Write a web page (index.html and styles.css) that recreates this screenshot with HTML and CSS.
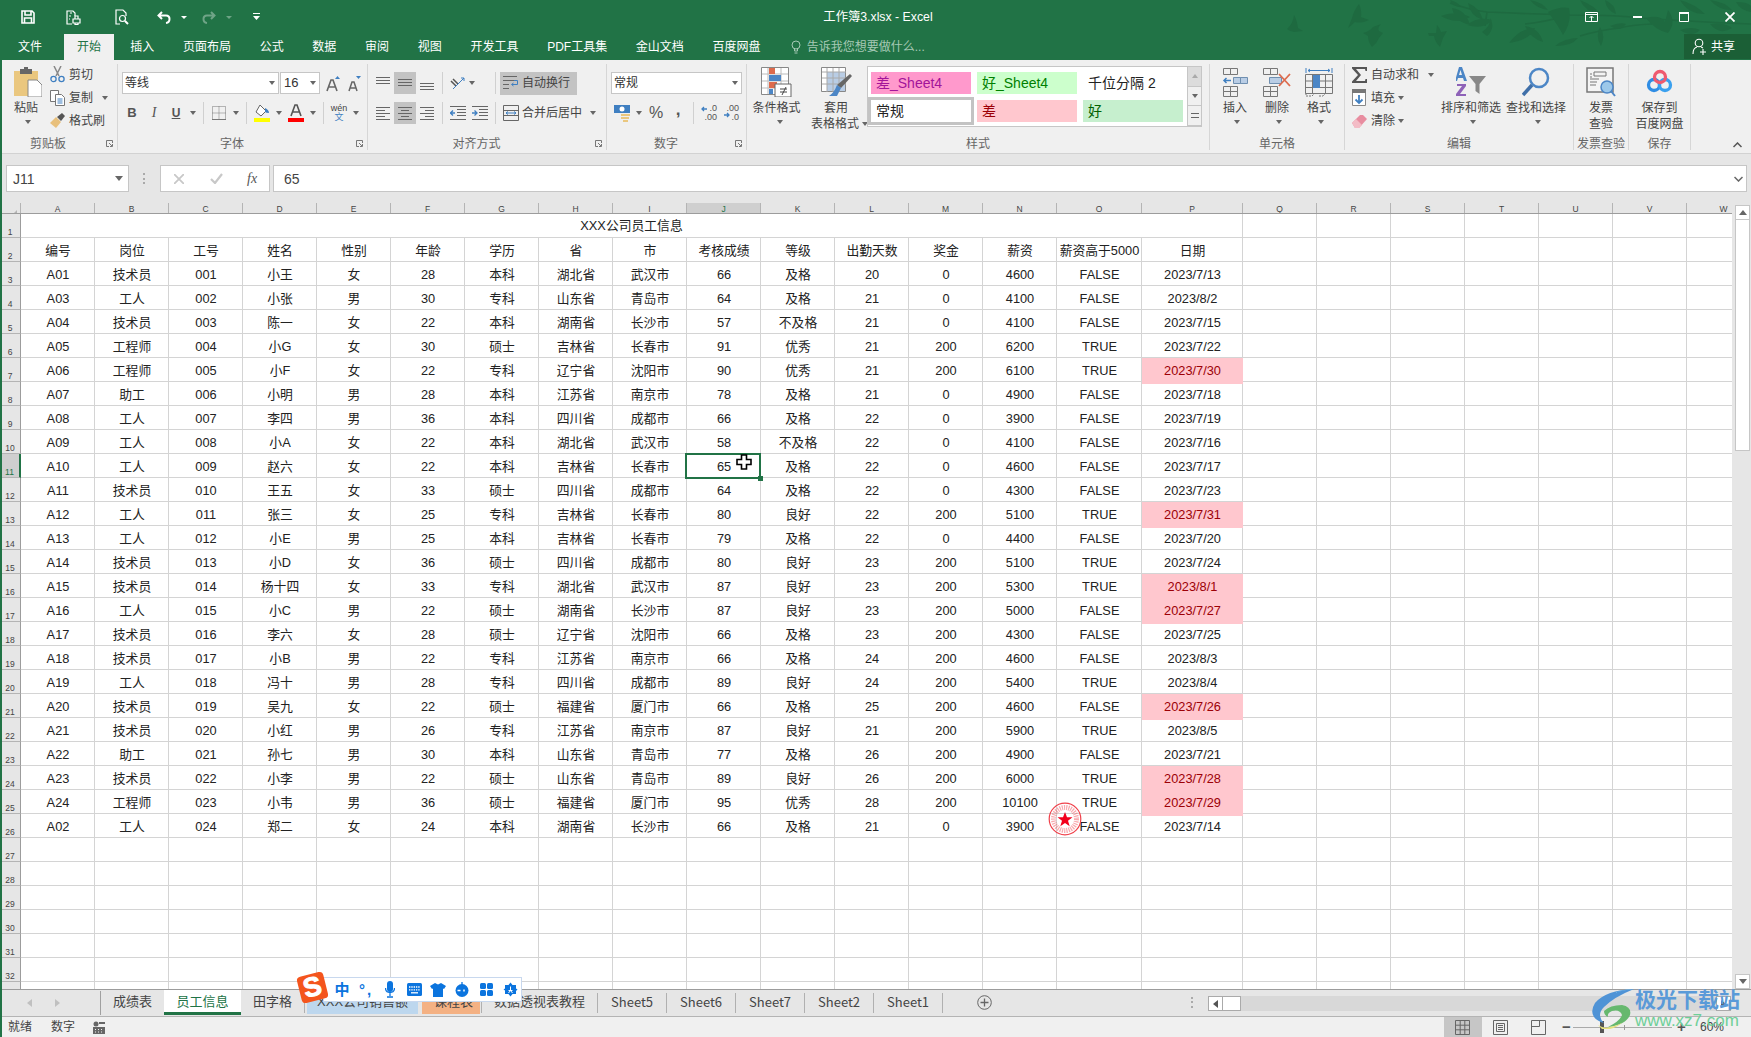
FILE: index.html
```html
<!DOCTYPE html>
<html lang="zh-CN">
<head>
<meta charset="utf-8">
<title>工作簿3.xlsx - Excel</title>
<link rel="stylesheet" href="styles.css">
</head>
<body>
<div class="app">
  <header class="title">
    <svg class="birds" width="471" height="47" viewBox="0 0 471 47" fill="#1e6a40">
      <path d="M7 29Q13 24 14 15Q17 20 18 28L23 31L14 32Q9 31 7 29z"/>
      <path d="M68 28L72 18Q74 10 79 4Q82 10 81 17L89 20L84 22Q78 23 75 22Q72 25 68 28z"/>
      <path d="M83 33Q90 31 93 27L101 24Q97 28 99 31L103 33L99 38Q97 43 92 47Q88 42 88 36z"/>
      <path d="M148 33L156 33L157 25Q160 28 161 32L167 31L163 38L160 47Q155 42 154 36L149 36z"/>
      <path d="M170 3Q190 10 207 12Q250 14 290 15Q340 15 360 18Q420 22 471 24M245 24Q265 22 285 16M300 36Q320 30 340 28Q350 25 372 24M207 12L205 26" fill="none" stroke="#1e6a40" stroke-width="1.600"/>
      <path d="M161 16Q175 10 190 17Q176 25 161 16zM172 8Q186 10 190 25Q175 22 172 8zM188 3Q200 8 203 20Q190 16 188 3zM170 0Q178 2 181 7Q172 7 170 0zM187 25Q198 16 212 20Q204 30 187 25zM202 32Q211 26 210 18Q216 28 207 36zM229 43Q240 28 255 28Q250 40 229 43zM245 26Q259 28 263 42Q250 38 245 26zM268 12Q280 6 289 8Q292 22 283 35Q278 25 268 12zM275 46Q285 38 298 38Q292 46 275 46zM320 27Q326 36 321 46Q315 36 320 27zM366 18Q380 14 385 22L388 10Q397 22 388 33Q375 30 366 18zM250 0Q262 2 268 10Q256 8 250 0zM300 0Q315 6 320 14Q305 12 300 0zM325 0Q335 4 336 14Q326 10 325 0zM330 26Q340 22 346 24Q340 32 330 26zM400 0Q415 4 425 14Q408 14 400 0zM430 0Q445 2 452 10Q438 10 430 0zM430 24Q445 22 452 28Q440 36 430 24zM456 2Q468 2 471 6L471 12Q460 10 456 2zM400 30Q412 26 420 30Q412 38 400 30z"/>
    </svg>
    <div class="qat">
      <svg width="14" height="14" viewBox="0 0 14 14" fill="none" stroke="#fff" stroke-width="1.6"><path d="M1 1h10l2 2v10H1zM4 1v4h6V1M3.500 13V8h7v5"/></svg>
      <svg class="m31" width="15" height="15" viewBox="0 0 15 15" fill="none" stroke="#fff" stroke-width="1.2"><path d="M6 14H1V1h6l2 2v3M4 3h2M3 6h2M3 9h1"/><path d="M7 9h7v4H7zM9 9V6h3v3M9 13v1.500h3V13"/></svg>
      <svg class="m34" width="14" height="16" viewBox="0 0 14 16" fill="none" stroke="#fff" stroke-width="1.2"><path d="M5 15H1V1h7l3 3v3"/><circle cx="7.500" cy="9.500" r="3"/><path d="M10 12l3 3" stroke-width="2"/></svg>
      <svg class="m28" width="14" height="13" viewBox="0 0 14 13" fill="none" stroke="#fff" stroke-width="2"><path d="M5 1L1.500 4.500 5 8M2 4.500h7q3.500 0 3.500 3.500T9 12"/></svg>
      <span class="qc m10"></span>
      <svg class="m15 dim" width="14" height="13" viewBox="0 0 14 13" fill="none" stroke="#fff" stroke-width="2"><path d="M9 1l3.500 3.500L9 8M12 4.500H5Q1.500 4.500 1.500 8T5 12"/></svg>
      <span class="qc m10 dim"></span>
      <svg class="m21" width="7" height="8" viewBox="0 0 7 8" fill="#fff"><path d="M0 0h7v1H0zM0 3h7L3.500 7z"/></svg>
    </div>
    <div class="doc-name">工作簿3.xlsx - Excel</div>
    <div class="win">
      <svg width="13" height="10" viewBox="0 0 13 10" fill="none" stroke="#fff"><path d="M.5.500h12v9H.5zM.5 2.500h12M6.500 9V4.500M4.500 6l2-2 2 2"/></svg>
      <svg class="m35" width="9" height="2" viewBox="0 0 9 2"><path d="M0 0h9v2H0z" fill="#fff"/></svg>
      <svg class="m37" width="10" height="10" viewBox="0 0 10 10" fill="none" stroke="#fff"><path d="M.5.500h9v9h-9z"/><path d="M0 1h10" stroke-width="2"/></svg>
      <svg class="m36" width="10" height="10" viewBox="0 0 10 10" stroke="#fff" stroke-width="1.8"><path d="M.5.500l9 9M9.500.500l-9 9"/></svg>
    </div>
  </header>

  <nav class="tabs">
    <a class="tab first">文件</a><a class="tab on">开始</a><a class="tab">插入</a><a class="tab">页面布局</a><a class="tab">公式</a><a class="tab">数据</a><a class="tab">审阅</a><a class="tab">视图</a><a class="tab">开发工具</a><a class="tab">PDF工具集</a><a class="tab">金山文档</a><a class="tab">百度网盘</a>
    <span class="tell">
      <svg width="10" height="15" viewBox="0 0 10 15" fill="none" stroke="#a6c9b5"><circle cx="5" cy="5" r="4"/><path d="M3.500 9v2h3V9M3.500 13h3"/></svg>
      告诉我您想要做什么...
    </span>
    <span class="share">
      <svg width="15" height="17" viewBox="0 0 15 17" fill="none" stroke="#fff" stroke-width="1.1"><circle cx="7" cy="5" r="3.800"/><path d="M1 16q0-6 4-7M9 9l2 1M8 14h6M11 11v6"/></svg>
      共享
    </span>
  </nav>

  <section class="ribbon">
    <div class="grp g-clip">
      <div class="body row-top">
        <div class="big paste">
          <svg class="pasteic" width="28" height="30" viewBox="0 0 28 30"><path d="M0 4h24v25H0z" fill="#eac77f" rx="2"/><path d="M6 2h4V0h4v2h4v5H6z" fill="#666"/><path d="M14 13h9l5 5v12H14z" fill="#fff" stroke="#888"/></svg>
          <span>粘贴</span>
          <span class="cr down"></span>
        </div>
        <div class="stack clipcol">
          <div class="sm"><svg width="15" height="17" viewBox="0 0 15 17" fill="none"><path d="M4 0l5 10M11 0L6 10" stroke="#888" stroke-width="1.500"/><circle cx="3.500" cy="13" r="2.600" stroke="#3f7fc1" stroke-width="1.300"/><circle cx="11.500" cy="13" r="2.600" stroke="#3f7fc1" stroke-width="1.300"/></svg><span>剪切</span></div>
          <div class="sm"><svg width="15" height="16" viewBox="0 0 15 16" fill="#fff" stroke="#777"><path d="M.5.500h8v11h-8z"/><path d="M5.500 4.500h6l3 3v8h-9z"/><path d="M7.500 9h5M7.500 11h5M7.500 13h5" stroke="#3f7fc1"/></svg><span>复制</span><span class="cr"></span></div>
          <div class="sm"><svg width="15" height="15" viewBox="0 0 15 15"><path d="M0 10l6-6 5 5-5 6z" fill="#e8c07c"/><path d="M7 4l5-4 3 3-4 5z" fill="#555"/></svg><span>格式刷</span></div>
        </div>
      </div>
      <div class="foot"><span class="lab">剪贴板</span><svg class="launch" width="7" height="7" viewBox="0 0 7 7" fill="none" stroke="#777"><path d="M6.500 3V.500H.500v6H3M3 3l3 3M6.500 4v2.500H4"/></svg></div>
    </div>

    <div class="grp g-font">
      <div class="body col-rows">
        <div class="line">
          <div class="combo fontname">等线<span class="cr end"></span></div>
          <div class="combo fontsize">16<span class="cr end"></span></div>
          <svg class="growA" width="14" height="17" viewBox="0 0 14 17"><path d="M1 16L5 5h2l4 11M3 12h6" fill="none" stroke="#666" stroke-width="1.600"/><path d="M9 4l2.500-3L14 4z" fill="#3f7fc1"/></svg>
          <svg class="shrinkA" width="13" height="17" viewBox="0 0 13 17"><path d="M1 16L4 7h2l3 9M2.500 13h5" fill="none" stroke="#666" stroke-width="1.500"/><path d="M8 1l2.500 3L13 1z" fill="#3f7fc1"/></svg>
        </div>
        <div class="line second">
          <span class="ic fb">B</span><span class="ic fi">I</span><span class="ic fu">U</span><span class="cr"></span><i class="sep"></i>
          <span class="ic"><svg width="14" height="14" viewBox="0 0 14 14" fill="none" stroke="#777" stroke-dasharray="1 1"><path d="M.5.500h13v13H.5zM7 .5v13M.5 7h13"/><path d="M0 13.500h14" stroke-dasharray="none"/></svg></span><span class="cr"></span><i class="sep"></i>
          <span class="ic"><svg width="16" height="18" viewBox="0 0 16 18"><path d="M6 1l-4 7 5 4 5-5z" fill="#fff" stroke="#666"/><path d="M11 4q4 2 4 5-3 0-4-1z" fill="#3f7fc1"/><path d="M0 14h16v4H0z" fill="#ff0"/></svg></span><span class="cr"></span>
          <span class="ic"><svg width="16" height="18" viewBox="0 0 16 18"><path d="M3 12L7 1h2l4 11M5 8h6" fill="none" stroke="#555" stroke-width="1.600"/><path d="M0 14h16v4H0z" fill="#f00"/></svg></span><span class="cr"></span><i class="sep"></i>
          <span class="ic wen"><small>wén</small><b>文</b></span><span class="cr"></span>
        </div>
      </div>
      <div class="foot"><span class="lab">字体</span><svg class="launch" width="7" height="7" viewBox="0 0 7 7" fill="none" stroke="#777"><path d="M6.500 3V.500H.500v6H3M3 3l3 3M6.500 4v2.500H4"/></svg></div>
    </div>

    <div class="grp g-align">
      <div class="body col-rows">
        <div class="line">
          <span class="ic"><svg width="14" height="14" viewBox="0 0 14 14" stroke="#666"><path d="M0 1.500h14M0 4.500h14M0 7.500h14"/></svg></span>
          <span class="ic act"><svg width="14" height="14" viewBox="0 0 14 14" stroke="#666"><path d="M0 3.500h14M0 6.500h14M0 9.500h14"/></svg></span>
          <span class="ic"><svg width="14" height="14" viewBox="0 0 14 14" stroke="#666"><path d="M0 7.500h14M0 10.500h14M0 13.500h14"/></svg></span>
          <i class="sep tall"></i>
          <span class="ic"><svg width="16" height="16" viewBox="0 0 16 16" fill="none" stroke="#555"><path d="M1 6l5 5M3 4l5 5" stroke-width="1.500"/><path d="M3 14L14 3M11 3h3v3" stroke="#3f7fc1"/></svg></span><span class="cr wide"></span>
          <i class="sep tall"></i>
          <div class="tool act"><svg width="16" height="16" viewBox="0 0 16 16" fill="none" stroke="#666"><path d="M0 1.500h14M0 5.500h11M0 9.500h6M0 13.500h6"/><path d="M11 5.500h3.500v4H9M10.500 8l-2 1.500 2 1.500" stroke="#3f7fc1"/></svg><span>自动换行</span></div>
        </div>
        <div class="line second">
          <span class="ic"><svg width="14" height="14" viewBox="0 0 14 14" stroke="#666"><path d="M0 1.500h14M0 4.500h9M0 7.500h14M0 10.500h9M0 13.500h14"/></svg></span>
          <span class="ic act"><svg width="14" height="14" viewBox="0 0 14 14" stroke="#666"><path d="M0 1.500h14M3 4.500h8M0 7.500h14M3 10.500h8M0 13.500h14"/></svg></span>
          <span class="ic"><svg width="14" height="14" viewBox="0 0 14 14" stroke="#666"><path d="M0 1.500h14M5 4.500h9M0 7.500h14M5 10.500h9M0 13.500h14"/></svg></span>
          <i class="sep tall"></i>
          <span class="ic"><svg width="16" height="14" viewBox="0 0 16 14" fill="none" stroke="#666"><path d="M0 .5h16M7 3.500h9M7 6.500h9M7 9.500h9M0 13.500h16"/><path d="M5 7H0M3 4.500L.5 7 3 9.500" stroke="#3f7fc1" stroke-width="1.300"/></svg></span>
          <span class="ic"><svg width="16" height="14" viewBox="0 0 16 14" fill="none" stroke="#666"><path d="M0 .5h16M7 3.500h9M7 6.500h9M7 9.500h9M0 13.500h16"/><path d="M0 7h5M2.500 4.500L5 7 2.500 9.500" stroke="#3f7fc1" stroke-width="1.300"/></svg></span>
          <i class="sep tall"></i>
          <div class="tool"><svg width="16" height="16" viewBox="0 0 16 16" fill="none" stroke="#666"><path d="M.5.500h15v15H.5zM0 5.500h16M0 10.500h16"/><path d="M3 8h10M5 6.500L3 8l2 1.500M11 6.500L13 8l-2 1.500" stroke="#3f7fc1"/></svg><span>合并后居中</span><span class="cr"></span></div>
        </div>
      </div>
      <div class="foot"><span class="lab">对齐方式</span><svg class="launch" width="7" height="7" viewBox="0 0 7 7" fill="none" stroke="#777"><path d="M6.500 3V.500H.500v6H3M3 3l3 3M6.500 4v2.500H4"/></svg></div>
    </div>

    <div class="grp g-num">
      <div class="body col-rows">
        <div class="line"><div class="combo numfmt">常规<span class="cr end"></span></div></div>
        <div class="line second">
          <span class="ic"><svg width="16" height="18" viewBox="0 0 16 18"><path d="M0 1h16v8H0z" fill="#3f7fc1"/><circle cx="8" cy="5" r="2.500" fill="#fff"/><path d="M7 10h9v2H7zM7 13h8v2H7zM9 16h5v2H9z" fill="#eac77f"/></svg></span><span class="cr"></span>
          <span class="ic pct">%</span><span class="ic comma">,</span><i class="sep tall"></i>
          <span class="ic dec"><svg width="15" height="14" viewBox="0 0 15 14" fill="none"><path d="M6 4H1M3 2L1 4l2 2" stroke="#3f7fc1" stroke-width="1.300"/></svg><em>.0</em><em>.00</em></span>
          <span class="ic dec"><svg width="15" height="14" viewBox="0 0 15 14" fill="none"><path d="M1 10h5M4 8l2 2-2 2" stroke="#3f7fc1" stroke-width="1.300"/></svg><em>.00</em><em>.0</em></span>
        </div>
      </div>
      <div class="foot"><span class="lab">数字</span><svg class="launch" width="7" height="7" viewBox="0 0 7 7" fill="none" stroke="#777"><path d="M6.500 3V.500H.500v6H3M3 3l3 3M6.500 4v2.500H4"/></svg></div>
    </div>

    <div class="grp g-style">
      <div class="body row-top">
        <div class="big w59">
          <svg width="31" height="30" viewBox="0 0 31 30"><path d="M.5.500h27v27H.5z" fill="#fff" stroke="#888"/><path d="M7 1v26M20 1v26M1 7h26M1 14h26M1 21h26" stroke="#bbb"/><path d="M8 1h6v6H8z" fill="#dd6b4d"/><path d="M8 8h12v6H8z" fill="#4c86c6"/><path d="M8 15h8v6H8z" fill="#dd6b4d"/><path d="M8 22h4v5H8z" fill="#4c86c6"/><path d="M14 17h16v13H14z" fill="#fff" stroke="#666"/><path d="M19 22h7M19 25h7M25 20l-4 8" stroke="#444"/></svg>
          <span>条件格式</span>
          <span class="cr down"></span>
        </div>
        <div class="big w60">
          <svg width="31" height="30" viewBox="0 0 31 30"><path d="M.5.500h24v24H.5z" fill="#fff" stroke="#888"/><path d="M6 5h18v19H6z" fill="#b9cde5"/><path d="M6 1v24M12 1v24M18 1v24M1 5h24M1 11h24M1 17h24" stroke="#aaa"/><path d="M29 7l2 2-11 12-4-3z" fill="#666"/><path d="M16 18l4 3-4 8H8q5-3 8-11z" fill="#4c86c6"/></svg>
          <span>套用</span>
          <span class="lastline">表格格式<span class="cr"></span></span>
        </div>
        <div class="gallery">
          <div class="cells">
            <span class="st s-pink">差_Sheet4</span><span class="st s-lime">好_Sheet4</span><span class="st">千位分隔 2</span>
            <span class="st s-norm">常规</span><span class="st s-bad">差</span><span class="st s-good">好</span>
          </div>
          <div class="gscroll"><span class="up"></span><span class="mid"></span><span class="more"></span></div>
        </div>
      </div>
      <div class="foot plain"><span class="lab">样式</span></div>
    </div>

    <div class="grp g-cells">
      <div class="body row-top">
        <div class="big w42">
          <svg width="27" height="30" viewBox="0 0 27 30" fill="none" stroke="#777"><path d="M1.500 1.500h7v6h-7zM8.500 1.500h7v6h-7zM1.500 19.500h7v5h-7zM8.500 19.500h7v5h-7zM1.500 24.500h7v5h-7zM8.500 24.500h7v5h-7z"/><path d="M11.500 10.500h7v6h-7zM18.500 10.500h7v6h-7z" fill="#b9cde5" stroke="#6f8fb0"/><path d="M9 13.500H2M4.500 11l-2.500 2.500L4.500 16" stroke="#3f7fc1" stroke-width="1.500"/></svg>
          <span>插入</span>
          <span class="cr down"></span>
        </div>
        <div class="big w42">
          <svg width="30" height="30" viewBox="0 0 30 30" fill="none" stroke="#777"><path d="M1.500 1.500h7v6h-7zM8.500 1.500h7v6h-7zM1.500 19.500h7v5h-7zM8.500 19.500h7v5h-7zM1.500 24.500h7v5h-7zM8.500 24.500h7v5h-7z"/><path d="M7.500 10.500h12v6h-12z" fill="#b9cde5" stroke="#6f8fb0"/><path d="M17 7l11 12M28 7L17 19" stroke="#dd6b4d" stroke-width="1.800"/></svg>
          <span>删除</span>
          <span class="cr down"></span>
        </div>
        <div class="big w42">
          <svg width="28" height="30" viewBox="0 0 28 30" fill="none" stroke="#777"><path d="M.5 7.500h27v19H.5zM7.500 7.500v19M20.500 7.500v19M.5 14h27M.5 20.500h27"/><path d="M8 8h7v13H8z" fill="#4c86c6" stroke="none"/><path d="M1 1v5M27 1v5M3 3.500h22M5 2l-2 1.500L5 5M23 2l2 1.500L23 5" stroke="#3f7fc1"/><path d="M1 26v3h6l3-3M14 29h4l3-3" stroke-dasharray="2 1"/></svg>
          <span>格式</span>
          <span class="cr down"></span>
        </div>
      </div>
      <div class="foot plain"><span class="lab">单元格</span></div>
    </div>

    <div class="grp g-edit">
      <div class="body row-top">
        <div class="stack editcol">
          <div class="sm"><svg width="15" height="16" viewBox="0 0 15 16"><path d="M0 0h15v4h-1.500L13 2H4l5 6-5 6h9l.5-2H15v4H0v-1.500L6 8 0 1.500z" fill="#555"/></svg><span>自动求和</span><span class="cr gap12"></span></div>
          <div class="sm"><svg width="15" height="17" viewBox="0 0 15 17"><path d="M.5.500h13v16H.5z" fill="#fff" stroke="#888"/><path d="M0 0h14v4H0z" fill="#777"/><path d="M7 6v8M3.500 10.500L7 14l3.500-3.500" fill="none" stroke="#3f7fc1" stroke-width="1.800"/></svg><span>填充</span><span class="cr"></span></div>
          <div class="sm"><svg width="15" height="14" viewBox="0 0 15 14"><path d="M0 9l8-8h3l4 4-8 9H3z" fill="#e88da0"/><path d="M0 9l4-4 6 6-3 3H3z" fill="#f3bcc6"/></svg><span>清除</span><span class="cr"></span></div>
        </div>
        <div class="big w60 m5">
          <svg width="30" height="30" viewBox="0 0 30 30"><path d="M3 0h3l5 14H8l-1-3H2l-1 3h-2zM3 8h3L4.500 3z" fill="#4c86c6"/><path d="M1 17h9v2L4 27h6v2H0v-2l6-8H1z" fill="#8e62b8"/><path d="M13 9h17l-6.500 8v10l-4-3v-7z" fill="#888"/></svg>
          <span>排序和筛选</span>
          <span class="cr down"></span>
        </div>
        <div class="big w60 m5">
          <svg width="28" height="30" viewBox="0 0 28 30" fill="none"><circle cx="17" cy="11" r="9" stroke="#4c86c6" stroke-width="2.500"/><path d="M10 18L1 28" stroke="#3f6fa8" stroke-width="3.500"/></svg>
          <span>查找和选择</span>
          <span class="cr down"></span>
        </div>
      </div>
      <div class="foot plain"><span class="lab">编辑</span></div>
    </div>

    <div class="grp g-inv">
      <div class="body row-top">
        <div class="big wfull">
          <svg width="30" height="30" viewBox="0 0 30 30"><path d="M1 1h26v24H1z" fill="#f4f4f4" stroke="#777" stroke-width="1.500"/><path d="M8 5h12v4H8z" fill="none" stroke="#777"/><path d="M4 12h9M4 15h7M4 18h6M4 7h2M4 10h2" stroke="#777"/><circle cx="21" cy="20" r="6" fill="#9cc8ea" stroke="#4c86c6" stroke-width="1.500"/><path d="M25 24l4 5" stroke="#4c86c6" stroke-width="2"/></svg>
          <span>发票</span><span>查验</span>
        </div>
      </div>
      <div class="foot plain"><span class="lab">发票查验</span></div>
    </div>

    <div class="grp g-bd">
      <div class="body row-top">
        <div class="big wfull">
          <svg width="27" height="30" viewBox="0 0 27 30" fill="none" stroke-width="3.300"><circle cx="8" cy="18" r="5.500" stroke="#2f8de4"/><circle cx="19" cy="18" r="5.500" stroke="#3aa0ee"/><circle cx="14" cy="10" r="5.500" stroke="#ef5a6f"/></svg>
          <span>保存到</span><span>百度网盘</span>
        </div>
      </div>
      <div class="foot plain"><span class="lab">保存</span></div>
    </div>
    <div class="collapse"><svg width="9" height="6" viewBox="0 0 9 6" fill="none" stroke="#555" stroke-width="1.500"><path d="M.5 5l4-4 4 4"/></svg></div>
  </section>

  <section class="fbar">
    <div class="namebox">J11<span class="cr end big-cr"></span></div>
    <span class="dots"></span>
    <div class="fbtns">
      <svg width="10" height="10" viewBox="0 0 10 10" stroke="#c8c8c8" stroke-width="1.800"><path d="M0 0l10 10M10 0L0 10"/></svg>
      <svg width="13" height="11" viewBox="0 0 13 11" fill="none" stroke="#c8c8c8" stroke-width="2.200"><path d="M1 6l4 4 7-9"/></svg>
      <span class="fx">fx</span>
    </div>
    <div class="finput">65<svg width="9" height="6" viewBox="0 0 9 6" fill="none" stroke="#666" stroke-width="1.500"><path d="M.5 1l4 4 4-4"/></svg></div>
  </section>

  <main class="main">
    <div class="sheet">
      <div class="colhead">
        <span class="corner"></span><span>A</span><span>B</span><span>C</span><span>D</span><span>E</span><span>F</span><span>G</span><span>H</span><span>I</span><span class="hl">J</span><span>K</span><span>L</span><span>M</span><span>N</span><span>O</span><span>P</span><span>Q</span><span>R</span><span>S</span><span>T</span><span>U</span><span>V</span><span>W</span>
      </div>
      <div class="grid">
        <div class="row"><b>1</b><span class="merged">XXX公司员工信息</span></div>
        <div class="row"><b>2</b><span>编号</span><span>岗位</span><span>工号</span><span>姓名</span><span>性别</span><span>年龄</span><span>学历</span><span>省</span><span>市</span><span>考核成绩</span><span>等级</span><span>出勤天数</span><span>奖金</span><span>薪资</span><span>薪资高于5000</span><span>日期</span></div>
        <div class="row"><b>3</b><span>A01</span><span>技术员</span><span>001</span><span>小王</span><span>女</span><span>28</span><span>本科</span><span>湖北省</span><span>武汉市</span><span>66</span><span>及格</span><span>20</span><span>0</span><span>4600</span><span>FALSE</span><span>2023/7/13</span></div>
        <div class="row"><b>4</b><span>A03</span><span>工人</span><span>002</span><span>小张</span><span>男</span><span>30</span><span>专科</span><span>山东省</span><span>青岛市</span><span>64</span><span>及格</span><span>21</span><span>0</span><span>4100</span><span>FALSE</span><span>2023/8/2</span></div>
        <div class="row"><b>5</b><span>A04</span><span>技术员</span><span>003</span><span>陈一</span><span>女</span><span>22</span><span>本科</span><span>湖南省</span><span>长沙市</span><span>57</span><span>不及格</span><span>21</span><span>0</span><span>4100</span><span>FALSE</span><span>2023/7/15</span></div>
        <div class="row"><b>6</b><span>A05</span><span>工程师</span><span>004</span><span>小G</span><span>女</span><span>30</span><span>硕士</span><span>吉林省</span><span>长春市</span><span>91</span><span>优秀</span><span>21</span><span>200</span><span>6200</span><span>TRUE</span><span>2023/7/22</span></div>
        <div class="row"><b>7</b><span>A06</span><span>工程师</span><span>005</span><span>小F</span><span>女</span><span>22</span><span>专科</span><span>辽宁省</span><span>沈阳市</span><span>90</span><span>优秀</span><span>21</span><span>200</span><span>6100</span><span>TRUE</span><span class="bad">2023/7/30</span></div>
        <div class="row"><b>8</b><span>A07</span><span>助工</span><span>006</span><span>小明</span><span>男</span><span>28</span><span>本科</span><span>江苏省</span><span>南京市</span><span>78</span><span>及格</span><span>21</span><span>0</span><span>4900</span><span>FALSE</span><span>2023/7/18</span></div>
        <div class="row"><b>9</b><span>A08</span><span>工人</span><span>007</span><span>李四</span><span>男</span><span>36</span><span>本科</span><span>四川省</span><span>成都市</span><span>66</span><span>及格</span><span>22</span><span>0</span><span>3900</span><span>FALSE</span><span>2023/7/19</span></div>
        <div class="row"><b>10</b><span>A09</span><span>工人</span><span>008</span><span>小A</span><span>女</span><span>22</span><span>本科</span><span>湖北省</span><span>武汉市</span><span>58</span><span>不及格</span><span>22</span><span>0</span><span>4100</span><span>FALSE</span><span>2023/7/16</span></div>
        <div class="row cur"><b>11</b><span>A10</span><span>工人</span><span>009</span><span>赵六</span><span>女</span><span>22</span><span>本科</span><span>吉林省</span><span>长春市</span><span class="sel">65<svg class="cursor" width="16" height="16" viewBox="0 0 16 16"><path d="M5.500 1h5v4.500H15v5h-4.500V15h-5v-4.500H1v-5h4.500z" fill="#fff" stroke="#000" stroke-width="1.600"/></svg></span><span>及格</span><span>22</span><span>0</span><span>4600</span><span>FALSE</span><span>2023/7/17</span></div>
        <div class="row"><b>12</b><span>A11</span><span>技术员</span><span>010</span><span>王五</span><span>女</span><span>33</span><span>硕士</span><span>四川省</span><span>成都市</span><span>64</span><span>及格</span><span>22</span><span>0</span><span>4300</span><span>FALSE</span><span>2023/7/23</span></div>
        <div class="row"><b>13</b><span>A12</span><span>工人</span><span>011</span><span>张三</span><span>女</span><span>25</span><span>专科</span><span>吉林省</span><span>长春市</span><span>80</span><span>良好</span><span>22</span><span>200</span><span>5100</span><span>TRUE</span><span class="bad">2023/7/31</span></div>
        <div class="row"><b>14</b><span>A13</span><span>工人</span><span>012</span><span>小E</span><span>男</span><span>25</span><span>本科</span><span>吉林省</span><span>长春市</span><span>79</span><span>及格</span><span>22</span><span>0</span><span>4400</span><span>FALSE</span><span>2023/7/20</span></div>
        <div class="row"><b>15</b><span>A14</span><span>技术员</span><span>013</span><span>小D</span><span>女</span><span>36</span><span>硕士</span><span>四川省</span><span>成都市</span><span>80</span><span>良好</span><span>23</span><span>200</span><span>5100</span><span>TRUE</span><span>2023/7/24</span></div>
        <div class="row"><b>16</b><span>A15</span><span>技术员</span><span>014</span><span>杨十四</span><span>女</span><span>33</span><span>专科</span><span>湖北省</span><span>武汉市</span><span>87</span><span>良好</span><span>23</span><span>200</span><span>5300</span><span>TRUE</span><span class="bad">2023/8/1</span></div>
        <div class="row"><b>17</b><span>A16</span><span>工人</span><span>015</span><span>小C</span><span>男</span><span>22</span><span>硕士</span><span>湖南省</span><span>长沙市</span><span>87</span><span>良好</span><span>23</span><span>200</span><span>5000</span><span>FALSE</span><span class="bad">2023/7/27</span></div>
        <div class="row"><b>18</b><span>A17</span><span>技术员</span><span>016</span><span>李六</span><span>女</span><span>28</span><span>硕士</span><span>辽宁省</span><span>沈阳市</span><span>66</span><span>及格</span><span>23</span><span>200</span><span>4300</span><span>FALSE</span><span>2023/7/25</span></div>
        <div class="row"><b>19</b><span>A18</span><span>技术员</span><span>017</span><span>小B</span><span>男</span><span>22</span><span>专科</span><span>江苏省</span><span>南京市</span><span>66</span><span>及格</span><span>24</span><span>200</span><span>4600</span><span>FALSE</span><span>2023/8/3</span></div>
        <div class="row"><b>20</b><span>A19</span><span>工人</span><span>018</span><span>冯十</span><span>男</span><span>28</span><span>专科</span><span>四川省</span><span>成都市</span><span>89</span><span>良好</span><span>24</span><span>200</span><span>5400</span><span>TRUE</span><span>2023/8/4</span></div>
        <div class="row"><b>21</b><span>A20</span><span>技术员</span><span>019</span><span>吴九</span><span>女</span><span>22</span><span>硕士</span><span>福建省</span><span>厦门市</span><span>66</span><span>及格</span><span>25</span><span>200</span><span>4600</span><span>FALSE</span><span class="bad">2023/7/26</span></div>
        <div class="row"><b>22</b><span>A21</span><span>技术员</span><span>020</span><span>小红</span><span>男</span><span>26</span><span>专科</span><span>江苏省</span><span>南京市</span><span>87</span><span>良好</span><span>21</span><span>200</span><span>5900</span><span>TRUE</span><span>2023/8/5</span></div>
        <div class="row"><b>23</b><span>A22</span><span>助工</span><span>021</span><span>孙七</span><span>男</span><span>30</span><span>本科</span><span>山东省</span><span>青岛市</span><span>77</span><span>及格</span><span>26</span><span>200</span><span>4900</span><span>FALSE</span><span>2023/7/21</span></div>
        <div class="row"><b>24</b><span>A23</span><span>技术员</span><span>022</span><span>小李</span><span>男</span><span>22</span><span>硕士</span><span>山东省</span><span>青岛市</span><span>89</span><span>良好</span><span>26</span><span>200</span><span>6000</span><span>TRUE</span><span class="bad">2023/7/28</span></div>
        <div class="row"><b>25</b><span>A24</span><span>工程师</span><span>023</span><span>小韦</span><span>男</span><span>36</span><span>硕士</span><span>福建省</span><span>厦门市</span><span>95</span><span>优秀</span><span>28</span><span>200</span><span>10100</span><span>TRUE</span><span class="bad">2023/7/29</span></div>
        <div class="row"><b>26</b><span>A02</span><span>工人</span><span>024</span><span>郑二</span><span>女</span><span>24</span><span>本科</span><span>湖南省</span><span>长沙市</span><span>66</span><span>及格</span><span>21</span><span>0</span><span>3900</span><span>FALSE</span><span>2023/7/14</span></div>
        <div class="row"><b>27</b></div>
        <div class="row"><b>28</b></div>
        <div class="row"><b>29</b></div>
        <div class="row"><b>30</b></div>
        <div class="row"><b>31</b></div>
        <div class="row"><b>32</b></div>
        <div class="row"><b></b></div>
        <svg class="stamp" width="34" height="34" viewBox="0 0 34 34" fill="none" stroke="#f0414b"><circle cx="17" cy="17" r="15.800" stroke-width="1.200"/><circle cx="17" cy="17" r="11.500" stroke-width="5" stroke-dasharray="1.200 1" opacity=".45"/><path d="M17 10l2 5.300h5.500l-4.500 3.400 1.700 5.500-4.700-3.300-4.700 3.300 1.700-5.500-4.500-3.400H15z" fill="#f2001c" stroke="none"/></svg>
      </div>
    </div>
    <aside class="vscroll">
      <span class="vbtn"><i class="tri-up"></i></span>
      <span class="vthumb"></span>
      <span class="vfill"></span>
      <span class="vbtn"><i class="tri-down"></i></span>
    </aside>
  </main>

  <footer class="sheets">
    <div class="sheetnav"><i class="nl"></i><i class="nr"></i></div>
    <div class="stabs">
      <span class="st-tab">成绩表</span><span class="st-tab active">员工信息</span><span class="st-tab">田字格</span><i class="stsep"></i><span class="st-tab blue">XXX公司销售额</span><span class="st-tab orange">课程表</span><i class="stsep"></i><span class="st-tab">数据透视表教程</span><i class="stsep"></i><span class="st-tab sh">Sheet5</span><i class="stsep"></i><span class="st-tab sh">Sheet6</span><i class="stsep"></i><span class="st-tab sh">Sheet7</span><i class="stsep"></i><span class="st-tab sh">Sheet2</span><i class="stsep"></i><span class="st-tab sh">Sheet1</span><i class="stsep"></i>
    </div>
    <svg class="addsheet" width="15" height="15" viewBox="0 0 15 15" fill="none" stroke="#666"><circle cx="7.500" cy="7.500" r="6.800"/><path d="M7.500 3.500v8M3.500 7.500h8" stroke-width="1.300"/></svg>
    <span class="hdots"></span>
    <div class="hscroll">
      <span class="hbtn"><i class="tri-left"></i></span><span class="hthumb"></span><span class="hfill"></span><span class="hbtn"><i class="tri-right"></i></span>
    </div>
  </footer>

  <footer class="status">
    <span class="s1">就绪</span><span class="s2">数字</span>
    <svg class="s3" width="12" height="13" viewBox="0 0 12 13" fill="#666"><circle cx="3" cy="3" r="2.500"/><path d="M6 1h6v2H6zM0 6h12v7H0z"/><path d="M2 8h1v1H2zM5 8h1v1H5zM8 8h1v1H8zM2 10.500h1v1H2zM5 10.500h1v1H5zM8 10.500h1v1H8z" fill="#f0f0f0"/></svg>
    <div class="views">
      <span class="vw on"><svg width="15" height="15" viewBox="0 0 15 15" fill="none" stroke="#666"><path d="M.5.500h14v14H.5zM5.200.5v14M9.800.5v14M.5 5.200h14M.5 9.800h14"/></svg></span>
      <span class="vw"><svg width="15" height="15" viewBox="0 0 15 15" fill="none" stroke="#666"><path d="M.5.500h14v14H.5z"/><path d="M3.500 3.500h8v8h-8zM5 5.500h5M5 7.500h5M5 9.500h5"/></svg></span>
      <span class="vw"><svg width="15" height="15" viewBox="0 0 15 15" fill="none" stroke="#666"><path d="M.5.500h14v14H.5zM8.500.5v6h-8"/></svg></span>
      <span class="zm">−</span>
      <span class="slider"><i class="thumb"></i><i class="tick"></i></span>
      <span class="zm plus">+</span>
      <span class="pct60">60%</span>
    </div>
  </footer>

  <div class="ime">
    <span class="ime-logo">S</span>
    <div class="ime-bar">
      <span class="ime-i zh">中</span>
      <span class="ime-i pun">°,</span>
      <span class="ime-i"><svg width="10" height="17" viewBox="0 0 10 17" fill="#0b74de"><path d="M2 3a3 3 0 016 0v5a3 3 0 01-6 0z"/><path d="M.5 7q0 4.500 4.500 4.500T9.500 7M5 11.500V15M2 16h6" fill="none" stroke="#0b74de" stroke-width="1.300"/></svg></span>
      <span class="ime-i"><svg width="15" height="13" viewBox="0 0 15 13"><rect width="15" height="13" rx="1.500" fill="#0b74de"/><path d="M2 4h11M2 6.800h11" stroke="#fff" stroke-width="1.300" stroke-dasharray="1.400 .9"/><path d="M4 9.800h7" stroke="#fff" stroke-width="1.300"/></svg></span>
      <span class="ime-i"><svg width="16" height="14" viewBox="0 0 16 14" fill="#0b74de"><path d="M5 0l3 1.500L11 0l5 3-2 3-1-.5V14H3V5.500L2 6 0 3z"/></svg></span>
      <span class="ime-i"><svg width="16" height="15" viewBox="0 0 16 15" fill="#0b74de"><circle cx="8" cy="8.500" r="6.500"/><path d="M8 0v3" stroke="#0b74de" stroke-width="1.300"/><path d="M3.500 8.500h3M10 7.500v2" stroke="#fff" stroke-width="1.500"/></svg></span>
      <span class="ime-i"><svg width="13" height="13" viewBox="0 0 13 13" fill="#0b74de"><rect width="6" height="6" rx="1.500"/><rect x="7" width="6" height="6" rx="1.500"/><rect y="7" width="6" height="6" rx="1.500"/><rect x="7" y="7" width="6" height="6" rx="1.500"/></svg></span>
      <span class="ime-i"><svg width="15" height="15" viewBox="0 0 15 15" fill="none"><path d="M7.500.5l2 2.500h3.500v3.500l1.500 1-1.500 1.500V12H9.500l-2 2.500-2-2.500H2V8.500L.5 7.500 2 6.500V3h3.500z" fill="#0b74de"/><path d="M7.500 4.500v4M5.500 8.500h4M7.500 8.500L5.500 11M7.500 8.500l2 2.500" stroke="#fff"/></svg></span>
    </div>
  </div>

  <div class="wm">
    <svg width="46" height="42" viewBox="0 0 46 42">
      <path d="M44 2Q16 3 5 16Q0 24 4 30Q7 34 14 36Q6 28 14 20Q24 10 44 2z" fill="#4f93d6"/>
      <path d="M44 2Q32 3 24 6Q34 2 44 2z" fill="#7cc4f0"/>
      <path d="M14 24Q20 18 32 18Q42 20 40 28Q36 38 18 40Q30 34 32 28Q30 22 22 24Q17 26 18 30Q14 28 14 24z" fill="#66b86e"/>
      <path d="M8 38Q14 42 20 40Q30 38 34 34Q24 44 12 42z" fill="#e6e27a"/>
    </svg>
    <div class="wm-t"><strong>极光下载站</strong><em>www.xz7.com</em></div>
  </div>
</div>
</body>
</html>
```
FILE: styles.css
```css
*,*::before,*::after{box-sizing:border-box}
html,body{margin:0;padding:0}
body{background:#e6e6e6;font:12px/16px "Liberation Sans","Noto Sans CJK SC",sans-serif;color:#444}
i,em{font-style:normal}
.app{position:relative;width:1751px;height:1037px;overflow:hidden;display:flex;flex-direction:column}
.app::before{content:"";position:absolute;left:0;top:60px;bottom:0;width:2px;background:#217346;z-index:5}

/* title bar */
.title{position:relative;z-index:1;height:34px;background:#217346;display:flex;align-items:center;color:#fff}
.birds{position:absolute;right:0;top:0;overflow:visible}
.qat{flex:1 1 0;display:flex;align-items:center;padding-left:21px;position:relative}
.doc-name{font-size:12.300px;position:relative}
.win{flex:1 1 0;display:flex;align-items:center;justify-content:flex-end;padding-right:16px;position:relative}
.m5{margin-left:5px}.m10{margin-left:10px}.m15{margin-left:15px}.m21{margin-left:21px}.m28{margin-left:28px}.m31{margin-left:31px}.m34{margin-left:34px}.m35{margin-left:35px}.m36{margin-left:36px}.m37{margin-left:37px}
.dim{opacity:.35}
.qc{width:0;height:0;border:3px solid transparent;border-top:3px solid #fff;border-bottom:0}

/* tabs */
.tabs{height:26px;background:#217346;display:flex;align-items:center;color:#fff;position:relative}
.tab{height:26px;line-height:27px;padding:0 12.500px;margin-right:3.700px;position:relative;z-index:2}
.tab.first{margin-left:5.500px;margin-right:9.500px}
.tab.on{background:#f0f0f0;color:#217346;padding:0 13px}
.tell{display:flex;align-items:center;gap:6px;margin-left:14px;color:#a6c9b5;position:relative;z-index:2}
.share{margin-left:auto;height:25px;align-self:flex-start;width:67px;background:#1b5f36;display:flex;align-items:center;gap:4px;padding-left:8px;position:relative;z-index:2}

/* ribbon */
.ribbon{height:94px;background:#f0f0f0;border-bottom:1px solid #d2d2d2;display:flex;padding-top:4px;flex:none}
.grp{height:86px;border-right:1px solid #d6d6d6;display:flex;flex-direction:column;flex:none}
.body{height:72px}
.row-top{display:flex}
.foot{height:14px;display:flex;color:#666}
.foot .lab{flex:1;text-align:center;line-height:16px}
.foot:not(.plain) .lab{margin-right:10px}
.launch{margin:4px 4px 0 0;flex:none}
.g-clip{width:118px}.g-font{width:250px;padding-left:3px}.g-align{width:239px;padding-left:4px}.g-num{width:140px;padding-left:4px}.g-style{width:463px}.g-cells{width:135px;padding-left:4px}.g-edit{width:229px;padding-left:7px}.g-inv{width:55px}.g-bd{width:62px}
.g-font .foot{margin-left:-3px}
.g-align .foot,.g-num .foot,.g-cells .foot{margin-left:-4px}
.g-edit .foot{margin-left:-7px}
.big{display:flex;flex-direction:column;align-items:center;padding-top:3px;flex:none}
.big>svg{height:30px;margin-bottom:3px;flex:none}
.big>span{white-space:nowrap}
.w42{width:42px}.w59{width:59px}.w60{width:60px}.wfull{width:100%}
.paste{width:38px;margin-left:7px}
.pasteic{margin-left:3px}
.cr{display:inline-flex;width:12px;height:10px;align-items:center;justify-content:center;flex:none}
.cr::before{content:"";border:3px solid transparent;border-top:4px solid #666;border-bottom:0}
.cr.down{margin-top:1px;padding-left:3px}
.w59 .cr.down{padding-left:6px}
.cr.wide{width:22px;justify-content:flex-start}
.lastline{display:flex;align-items:center;margin-left:10px}
.stack{display:flex;flex-direction:column;margin-top:-1px}
.sm{height:23px;display:flex;align-items:center;gap:4px;white-space:nowrap}
.sm svg{flex:none}
.clipcol{margin-left:5px}
.clipcol .cr{margin-left:2px}
.editcol{width:84px}
.editcol .cr{margin-left:-4px}
.editcol .cr.gap12{margin-left:2px}
.col-rows{padding-top:8px}
.line{height:22px;display:flex;align-items:center}
.line.second{margin-top:8px}
.combo{height:22px;background:#fff;border:1px solid #c6c6c6;display:flex;align-items:center;padding-left:2px;color:#333}
.combo .end{margin-left:auto}
.fontname{width:157px;margin-left:1px}
.fontsize{width:40px;margin-left:1px;padding-left:3px;font-size:13px}
.growA{margin-left:6px}.shrinkA{margin-left:8px}
.numfmt{width:131px}
.ic{width:22px;height:22px;display:flex;align-items:center;justify-content:center;flex:none;color:#555}
.ic.act,.tool.act{background:#c3c3c3}
.fb{font-weight:700;font-size:13px}
.fi{font-style:italic;font-family:"Liberation Serif",serif;font-size:14px}
.fu{text-decoration:underline;font-weight:700;font-size:12px}
.sep{width:1px;height:22px;background:#d0d0d0;margin:0 4px;flex:none}
.wen{flex-direction:column;line-height:9px}
.wen small{font-size:9px;color:#444}
.wen b{font-size:9px;color:#3f7fc1;font-weight:400}
.tool{display:flex;align-items:center;gap:3px;height:23px;padding:0 3px;width:77px;white-space:nowrap;flex:none}
.tool svg{flex:none}
.tool .cr{margin-left:2px}
.pct{font-size:16px}
.comma{font-size:17px;font-weight:700;padding-bottom:6px}
.dec{position:relative;flex-direction:column;align-items:flex-end;font-size:9px;line-height:9px;padding-right:3px}
.dec svg{position:absolute;left:3px;top:3px}
.gallery{width:335px;height:61px;margin:2px 0 0 1px;display:flex;background:#fff;flex:none;border:1px solid #c6c6c6;border-right:0}
.cells{width:320px;display:grid;grid-template-columns:repeat(3,100px);grid-auto-rows:22px;gap:6px;padding:5px 0 0 3px;font-size:14px}
.st{line-height:22px;padding-left:5px;color:#222}
.s-pink{background:#ff99cc;color:#a3149a}
.s-lime{background:#ccffcc;color:#008000}
.s-norm{box-shadow:0 0 0 3px #c3c3c3;color:#222}
.s-bad{background:#ffc7ce;color:#9c0006}
.s-good{background:#c6efce;color:#006100}
.gscroll{width:15px;display:flex;flex-direction:column;background:#f0f0f0;border:1px solid #c6c6c6;border-width:0 1px}
.gscroll span{flex:1;border-bottom:1px solid #c6c6c6;display:flex;align-items:center;justify-content:center}
.gscroll .up{background:#dcdcdc}
.gscroll .up::before{content:"";border:3px solid transparent;border-bottom:4px solid #aaa;border-top:0}
.gscroll .mid::before{content:"";border:3px solid transparent;border-top:4px solid #666;border-bottom:0}
.gscroll .more::before{content:"";width:8px;height:6px;border-top:1px solid #666;background:linear-gradient(#666,#666) 0 3px/8px 1px no-repeat}
.collapse{margin-left:auto;padding:72px 9px 0 0}

/* formula bar */
.fbar{height:49px;flex:none;background:#e6e6e6;display:flex;align-items:flex-start;padding:11px 4px 0 6px}
.namebox{width:123px;height:27px;background:#fff;border:1px solid #c6c6c6;display:flex;align-items:center;padding-left:6px;font-size:14px}
.namebox .end{margin-left:auto;margin-right:3px}
.big-cr::before{border-width:4px;border-top-width:5px;border-bottom:0}
.dots{width:2px;height:11px;margin:8px 15px 0 14px;background:repeating-linear-gradient(#aaa 0 2px,transparent 2px 4.500px)}
.fbtns{width:110px;height:27px;background:#fff;border:1px solid #c6c6c6;display:flex;align-items:center;padding-left:13px;gap:26px}
.fx{font:italic 14px "Liberation Serif",serif;color:#555;margin-left:-2px}
.finput{flex:1;height:27px;margin-left:3px;background:#fff;border:1px solid #c6c6c6;display:flex;align-items:center;justify-content:space-between;padding:0 3px 0 10px;font-size:14px}

/* sheet */
.main{height:786px;flex:none;display:flex;background:#e6e6e6}
.sheet{width:1732px;display:flex;flex-direction:column;flex:none}
.colhead{height:11px;flex:none;display:grid;grid-template-columns:21px repeat(14,74px) 85px 101px repeat(7,74px);background:#e6e6e6;border-bottom:1px solid #9c9c9c;font-size:8.500px;line-height:13px;color:#444;overflow:hidden}
.colhead span{text-align:center;border-right:1px solid #b4b4b4}
.colhead .hl{background:#cfcfcf;border-bottom:2px solid #217346;color:#217346}
.colhead .corner{position:relative}
.corner::after{content:"";position:absolute;right:3px;bottom:2px;border:3px solid transparent;border-right-color:#b4b4b4;border-bottom-color:#b4b4b4}
.grid{position:relative;flex:1;overflow:hidden;background-color:#fff;background-image:
  repeating-linear-gradient(180deg,transparent 0 23px,#d4d4d4 23px 24px),
  repeating-linear-gradient(90deg,transparent 0 73px,#d4d4d4 73px 74px),
  linear-gradient(#d4d4d4,#d4d4d4),
  linear-gradient(#d4d4d4,#d4d4d4),
  repeating-linear-gradient(90deg,transparent 0 73px,#d4d4d4 73px 74px);
  background-size:100% 100%,1036px 100%,1px 100%,1px 100%,489px 100%;
  background-position:0 0,21px 0,1141px 0,1242px 0,1243px 0;
  background-repeat:no-repeat}
.row{height:24px;display:grid;grid-template-columns:21px repeat(14,74px) 85px 101px;font-size:12.800px;color:#222;text-align:center;line-height:26px}
.row b{font-weight:400;font-size:8.500px;line-height:9px;color:#444;background:#e6e6e6;border-right:1px solid #9c9c9c;border-bottom:1px solid #b4b4b4;padding-top:14px;text-align:center;height:24px}
.row.cur b{background:#cfcfcf;border-right:2px solid #217346;color:#217346}
.row span{white-space:nowrap;min-width:0}
.merged{grid-column:span 16;background:#fff;height:23px;margin-right:1px;line-height:23px}
.bad{background:#ffc7ce;color:#9c0006}
.sel{position:relative}
.sel::before{content:"";position:absolute;left:-2px;top:-1px;width:76px;height:26px;border:2px solid #217346}
.sel::after{content:"";position:absolute;left:71px;top:22px;width:5px;height:5px;background:#217346}
.cursor{position:absolute;left:49px;top:0}
.stamp{position:absolute;left:1048px;top:588px}

/* vertical scrollbar */
.vscroll{flex:1;display:flex;flex-direction:column;padding:2px 1px 0 3px;background:#e6e6e6}
.vbtn{height:15px;background:#fff;border:1px solid #c6c6c6;display:flex;align-items:center;justify-content:center;flex:none}
.vthumb{height:231px;background:#fff;border:1px solid #c6c6c6;border-top:0;flex:none}
.vfill{flex:1}
.tri-up{border:4px solid transparent;border-bottom:5px solid #666;border-top:0}
.tri-down{border:4px solid transparent;border-top:5px solid #666;border-bottom:0}
.tri-left{border:4px solid transparent;border-right:5px solid #555;border-left:0}
.tri-right{border:4px solid transparent;border-left:5px solid #555;border-right:0}

/* sheet tabs */
.sheets{height:28px;flex:none;background:#e6e6e6;border-top:1px solid #9c9c9c;border-bottom:1px solid #b4b4b4;display:flex;align-items:flex-start;font-size:13px}
.sheetnav{width:101px;height:24px;display:flex;align-items:center;padding-left:27px;gap:23px;border-right:1px solid #a0a0a0;margin-top:1px;flex:none}
.nl{border:4px solid transparent;border-right:5px solid #c0c0c0;border-left:0}
.nr{border:4px solid transparent;border-left:5px solid #c0c0c0;border-right:0}
.stabs{display:flex;align-items:flex-start;flex:none}
.st-tab{height:24px;line-height:24px;padding:0 12px;white-space:nowrap;color:#444;flex:none}
.st-tab.active{background:#fff;color:#217346;height:25px;border-bottom:3px solid #217346;padding:0 12.500px}
.st-tab.blue{background:#bdd7ee;width:111px;margin-left:2px;padding:0 10px;overflow:hidden}
.st-tab.orange{background:#f4b183;width:58px;margin-left:4px;margin-right:1px}
.st-tab.sh{width:68px;padding:0;text-align:center;font-family:"Noto Sans CJK SC",sans-serif}
.stsep{width:1px;height:20px;margin-top:3px;background:#b0b0b0;flex:none}
.addsheet{margin:5px 0 0 34px;flex:none}
.hdots{width:2px;height:11px;margin:7px 15px 0 199px;background:repeating-linear-gradient(#aaa 0 2px,transparent 2px 4.500px);flex:none}
.hscroll{width:523px;height:15px;margin-top:6px;background:#d8d8d8;display:flex;flex:none}
.hbtn{width:15px;height:15px;background:#fff;border:1px solid #aaa;display:flex;align-items:center;justify-content:center;flex:none}
.hthumb{width:18px;background:#fff;border:1px solid #aaa;border-left:0}
.hfill{flex:1}

/* status */
.status{height:20px;flex:none;background:#f0f0f0;display:flex;align-items:center;position:relative;color:#444}
.s1{margin-left:8px}.s2{margin-left:19px}.s3{margin-left:18px}
.views{margin-left:auto;display:flex;align-items:center;height:20px;padding-right:27px}
.vw{width:38px;height:20px;display:flex;align-items:center;justify-content:center}
.vw.on{background:#c6c6c6}
.zm{width:8px;margin-left:4px;font-weight:700;font-size:15px;text-align:center;color:#555}
.zm.plus{margin-left:5px}
.slider{position:relative;width:99px;height:1px;margin-left:3px;background:#aaa}
.thumb{position:absolute;left:27px;top:-6px;width:4px;height:12px;background:#555}
.tick{position:absolute;left:51px;top:-2px;width:1px;height:5px;background:#999}
.pct60{margin-left:15px}

/* floating input-method bar */
.ime{position:absolute;left:298px;top:973px;display:flex;align-items:flex-start;z-index:6}
.ime-logo{width:27px;height:27px;margin:1px 0 0 1px;background:#f4551d;border-radius:4px;transform:rotate(-14deg);color:#fff;font:900 27px/27px "Liberation Sans",sans-serif;-webkit-text-stroke:1px #fff;text-align:center;position:relative;z-index:1;flex:none}
.ime-bar{margin:4px 0 0 -3px;width:199px;height:25px;background:#fff;border:1px solid #c8d8ee;display:flex;align-items:center;padding-left:6px;flex:none}
.ime-i{width:24px;height:24px;display:flex;align-items:center;justify-content:center;color:#0b74de;flex:none}
.zh{font-size:15px;font-weight:700}
.pun{font-size:15px;font-weight:700;letter-spacing:2px}

/* watermark */
.wm{position:absolute;left:1590px;top:987px;display:flex;z-index:6;pointer-events:none}
.wm-t{display:flex;flex-direction:column;margin-left:-1px}
.wm-t strong{font:700 21px/22px "Noto Sans CJK SC",sans-serif;color:#5a9ad8}
.wm-t em{font:17px/18px "Liberation Sans",sans-serif;color:#6ecf98;margin-top:3px}
```
